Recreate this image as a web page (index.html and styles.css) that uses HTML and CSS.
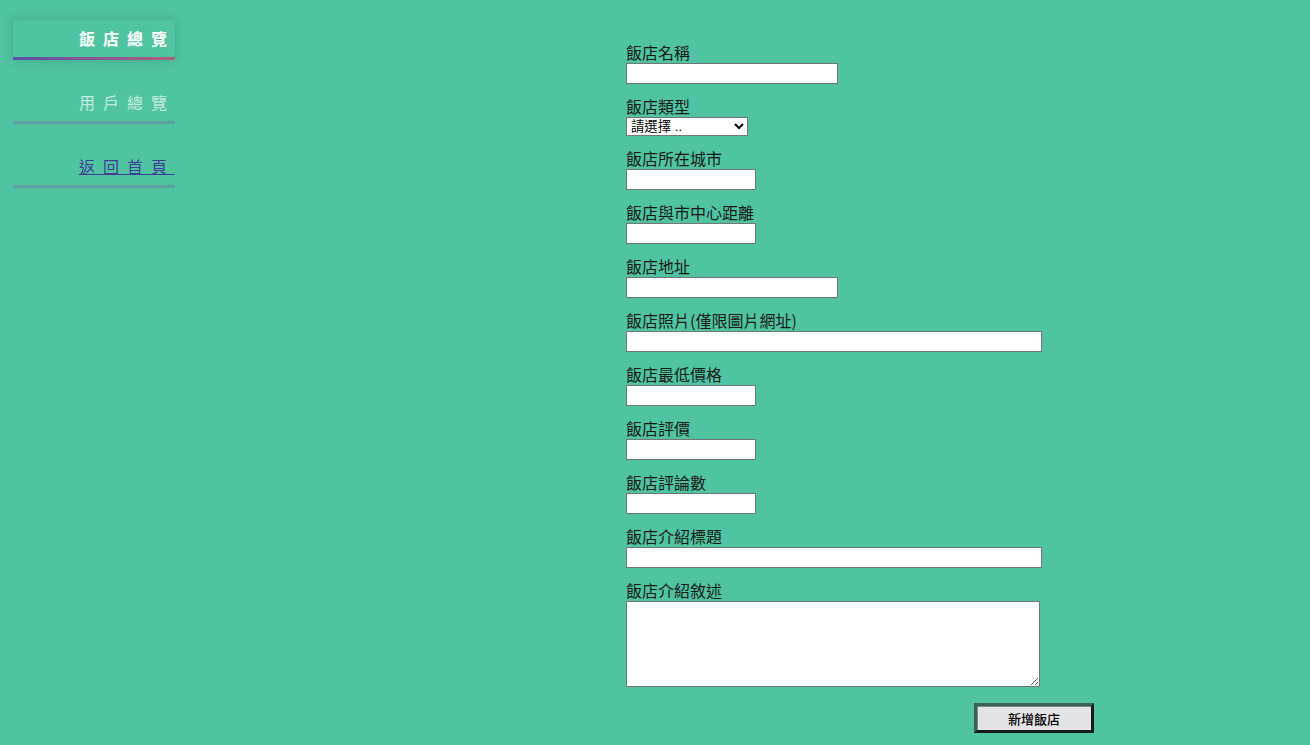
FILE: index.html
```html
<!DOCTYPE html>
<html lang="zh-Hant">
<head>
<meta charset="utf-8">
<title>新增飯店</title>
<link rel="stylesheet" href="styles.css">
</head>
<body>
<div class="page">
  <nav class="sidebar">
    <div class="nav-item active"><span>飯店總覽</span></div>
    <div class="nav-item muted"><span>用戶總覽</span></div>
    <div class="nav-item"><a href="#" class="home-link">返回首頁</a></div>
  </nav>
  <main class="main">
    <form class="hotel-form">
      <div class="field"><label>飯店名稱</label><input type="text" class="w-md"></div>
      <div class="field"><label>飯店類型</label>
        <select class="type-select"><option>請選擇 ..</option></select>
      </div>
      <div class="field"><label>飯店所在城市</label><input type="text" class="w-sm"></div>
      <div class="field"><label>飯店與市中心距離</label><input type="text" class="w-sm"></div>
      <div class="field"><label>飯店地址</label><input type="text" class="w-md"></div>
      <div class="field"><label>飯店照片(僅限圖片網址)</label><input type="text" class="w-lg"></div>
      <div class="field"><label>飯店最低價格</label><input type="text" class="w-sm"></div>
      <div class="field"><label>飯店評價</label><input type="text" class="w-sm"></div>
      <div class="field"><label>飯店評論數</label><input type="text" class="w-sm"></div>
      <div class="field"><label>飯店介紹標題</label><input type="text" class="w-lg"></div>
      <div class="field field-last"><label>飯店介紹敘述</label><textarea class="desc"></textarea></div>
      <div class="actions"><button type="button" class="submit-btn">新增飯店</button></div>
    </form>
  </main>
</div>
</body>
</html>
```
FILE: styles.css
```css
html, body {
  margin: 0;
  padding: 0;
  background: #50c4a1;
  min-height: 100%;
}
body {
  font-family: "Noto Sans CJK TC", "Liberation Sans", sans-serif;
  color: #1a1a1a;
}
.page {
  display: flex;
  align-items: flex-start;
  min-height: 745px;
}
.sidebar {
  width: 162px;
  margin: 20px 0 0 13px;
  display: flex;
  flex-direction: column;
  gap: 24px;
}
.nav-item {
  padding: 10px 0;
  text-align: right;
  font-size: 16px;
  line-height: 17px;
  letter-spacing: 8px;
  border-bottom: 3px solid rgba(110, 130, 160, 0.55);
}
.nav-item span, .nav-item a {
  display: inline-block;
}
.nav-item.active {
  color: #ffffff;
  font-weight: bold;
  border-bottom: 3px solid transparent;
  border-image: linear-gradient(90deg, #5a50a6, #b0607e) 1;
  box-shadow: 0 0 10px rgba(40, 110, 90, 0.35);
}
.nav-item.muted {
  color: #c2ecdc;
}
.home-link {
  color: #3f3d98;
  text-decoration: underline;
}
.main {
  flex: 1;
  padding: 45px 0 0 451px;
}
.hotel-form {
  width: 468px;
  display: flex;
  flex-direction: column;
}
.field {
  display: flex;
  flex-direction: column;
  align-items: flex-start;
  margin-bottom: 15px;
}
.field.field-last {
  margin-bottom: 16px;
}
.field label {
  font-size: 16px;
  line-height: 14px;
  padding-bottom: 4px;
  color: #1a1a1a;
}
.field input {
  box-sizing: border-box;
  height: 21px;
  margin: 0;
  padding: 1px 2px;
  border: 1px solid #767676;
  background: #ffffff;
  font-family: "Liberation Sans", sans-serif;
  font-size: 13.33px;
}
.w-sm { width: 130px; }
.w-md { width: 212px; }
.w-lg { width: 416px; }
.type-select {
  box-sizing: border-box;
  width: 122px;
  height: 19px;
  margin: 0;
  font-family: "Liberation Sans", "Noto Sans CJK TC", sans-serif;
  font-size: 13.33px;
  border: 1px solid #767676;
  background: #ffffff;
  color: #000;
}
.desc {
  box-sizing: border-box;
  width: 414px;
  height: 86px;
  margin: 0;
  border: 1px solid #767676;
  background: #ffffff;
  resize: both;
}
.actions {
  display: flex;
  justify-content: flex-end;
}
.submit-btn {
  box-sizing: border-box;
  width: 120px;
  height: 30px;
  background: #e4e4e6;
  border: 3px solid;
  border-color: #3c5f59 #121c1b #121c1b #3c5f59;
  box-shadow: inset 1px 1px 0 #6a8f88;
  font-family: "Noto Sans CJK TC", sans-serif;
  font-size: 13px;
  font-weight: 500;
  color: #000;
  padding: 0;
}
```
